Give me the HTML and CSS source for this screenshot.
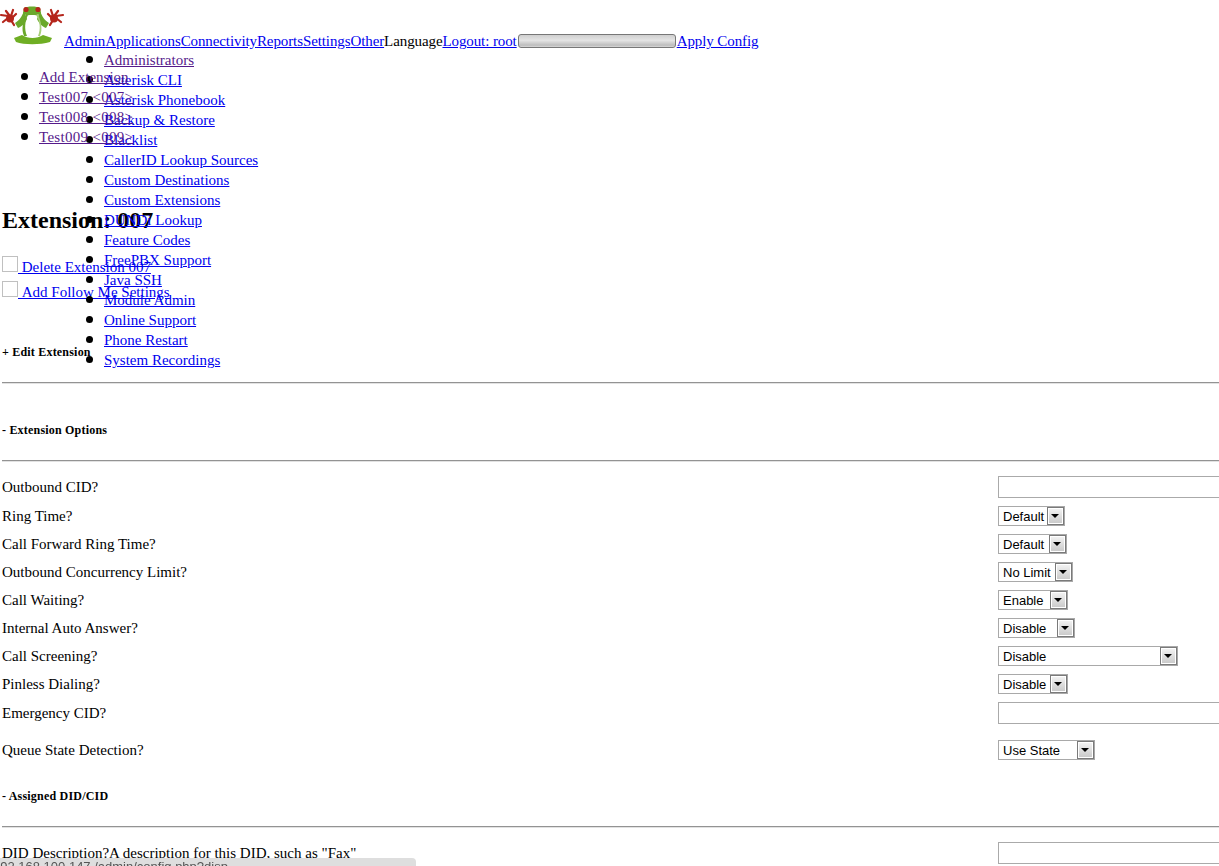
FILE: index.html
```html
<!DOCTYPE html>
<html lang="en">
<head>
<meta charset="utf-8">
<title>Extension: 007</title>
<link rel="stylesheet" href="styles.css">
</head>
<body>
<header class="topbar">
  <svg class="logo" width="64" height="46" viewBox="0 0 64 46" aria-label="Logo">
    <path d="M24 11 C22 16 20 20 15 23 L18 28 C23 26 25 23 27 19Z" fill="#6aa82a"/>
    <path d="M40 11 C42 16 44 20 49 23 L46 28 C41 26 39 23 37 19Z" fill="#6aa82a"/>
    <path d="M24 8 C27 6 37 6 40 8 L41 13 C38 16 36 15 32 15 C28 15 26 16 23 13Z" fill="#6aa82a"/>
    <path d="M26 14 C23 22 21 29 24 36 L27 36 C24 29 25 21 28 15Z" fill="#6aa82a"/>
    <path d="M38 14 C41 22 43 29 40 36 L38 36 C41 29 40 21 36 15Z" fill="#a8cf7a"/>
    <path d="M14 38 L22 35 C28 39 37 39 43 35 L52 38 L50 42 C40 45 24 45 16 42Z" fill="#6fae24"/>
    <circle cx="26" cy="9.5" r="2.6" fill="#b5261c"/>
    <circle cx="38" cy="9.5" r="2.6" fill="#b5261c"/>
    <circle cx="10" cy="18.5" r="4" fill="#b5261c"/>
    <circle cx="54" cy="18.5" r="4" fill="#b5261c"/>
    <path class="hand" d="M8 16 L1 15 M8 18 L3 22 M9 15 L6 11 M11 16 L13 10 M12 18 L16 14 M11 20 L14 25"/>
    <path class="hand" d="M56 16 L63 15 M56 18 L61 22 M55 15 L58 11 M53 16 L51 10 M52 18 L48 14 M53 20 L50 25"/>
  </svg><a href="#">Admin</a><a href="#">Applications</a><a href="#">Connectivity</a><a href="#">Reports</a><a href="#">Settings</a><a href="#">Other</a><span>Language</span><a href="#">Logout: root</a><span class="progress"></span><a href="#">Apply Config</a>
</header>

<ul class="menu">
  <li><a class="seen" href="#">Administrators</a></li>
  <li><a href="#">Asterisk CLI</a></li>
  <li><a href="#">Asterisk Phonebook</a></li>
  <li><a href="#">Backup &amp; Restore</a></li>
  <li><a href="#">Blacklist</a></li>
  <li><a href="#">CallerID Lookup Sources</a></li>
  <li><a href="#">Custom Destinations</a></li>
  <li><a href="#">Custom Extensions</a></li>
  <li><a href="#">DUNDi Lookup</a></li>
  <li><a href="#">Feature Codes</a></li>
  <li><a href="#">FreePBX Support</a></li>
  <li><a href="#">Java SSH</a></li>
  <li><a href="#">Module Admin</a></li>
  <li><a href="#">Online Support</a></li>
  <li><a href="#">Phone Restart</a></li>
  <li><a href="#">System Recordings</a></li>
</ul>

<ul class="extlist">
  <li><a class="seen" href="#">Add Extension</a></li>
  <li><a class="seen ext" href="#">Test007 &lt;007&gt;</a></li>
  <li><a class="seen ext" href="#">Test008 &lt;008&gt;</a></li>
  <li><a class="seen ext" href="#">Test009 &lt;009&gt;</a></li>
</ul>

<main class="content">
  <h2 class="title">Extension: 007</h2>
  <div class="actions">
    <a href="#"><span class="noimg"></span>&nbsp;Delete Extension 007</a>
    <a href="#"><span class="noimg"></span>&nbsp;Add Follow Me Settings</a>
  </div>

  <h5 class="edit">+ Edit Extension</h5>
  <hr class="rule">
  <h5 class="section">- Extension Options</h5>
  <hr class="rule">

  <div class="rows">
    <div class="row"><span>Outbound CID?</span><input class="field" type="text"></div>
    <div class="row"><span>Ring Time?</span><span class="sel w67"><span>Default</span><i class="btn"></i></span></div>
    <div class="row"><span>Call Forward Ring Time?</span><span class="sel w69"><span>Default</span><i class="btn"></i></span></div>
    <div class="row"><span>Outbound Concurrency Limit?</span><span class="sel w75"><span>No Limit</span><i class="btn"></i></span></div>
    <div class="row"><span>Call Waiting?</span><span class="sel w70"><span>Enable</span><i class="btn"></i></span></div>
    <div class="row"><span>Internal Auto Answer?</span><span class="sel w77"><span>Disable</span><i class="btn"></i></span></div>
    <div class="row"><span>Call Screening?</span><span class="sel w180"><span>Disable</span><i class="btn"></i></span></div>
    <div class="row"><span>Pinless Dialing?</span><span class="sel w70"><span>Disable</span><i class="btn"></i></span></div>
    <div class="row"><span>Emergency CID?</span><input class="field" type="text"></div>
    <div class="row queue"><span>Queue State Detection?</span><span class="sel w97"><span>Use State</span><i class="btn"></i></span></div>
  </div>

  <h5 class="section did">- Assigned DID/CID</h5>
  <hr class="rule">
  <div class="rows">
    <div class="row"><span>DID Description?A description for this DID, such as "Fax"</span><input class="field" type="text"></div>
  </div>
</main>

<div class="status"><span>192.168.100.147 /admin/config.php?disp</span></div>
</body>
</html>
```
FILE: styles.css
```css
html, body {
  margin: 0;
  padding: 0;
  height: 866px;
  overflow: hidden;
  background: #fff;
}
body {
  position: relative;
  font-family: "Liberation Serif", "Times New Roman", serif;
  font-size: 15px;
  color: #000;
}
a { color: #0000ee; text-decoration: underline; }
a.seen { color: #551a8b; }
a.ext { letter-spacing: 0.3px; }

.topbar { height: 50px; white-space: nowrap; letter-spacing: -0.1px; }
.logo { vertical-align: baseline; }
.hand { fill: none; stroke: #b5261c; stroke-width: 2.2; stroke-linecap: round; }
.progress {
  display: inline-block;
  box-sizing: border-box;
  width: 158px;
  height: 14px;
  margin: 0 1px 0 1px;
  vertical-align: -2px;
  border: 1px solid #777;
  border-radius: 3px;
  background: linear-gradient(#cfcfcf, #e4e4e4 45%, #bdbdbd 85%, #d8d8d8);
}

.menu, .extlist { margin: 0; list-style: none; line-height: 20px; }
.menu li, .extlist li { position: relative; }
.menu li::before, .extlist li::before {
  content: "";
  position: absolute;
  left: -18px;
  top: 6px;
  width: 7px;
  height: 7px;
  border-radius: 50%;
  background: #000;
}
.menu { position: absolute; left: 64px; top: 50px; padding: 0 0 0 40px; }
.extlist { margin-top: 17px; padding: 0 0 0 39px; }

.content { padding-left: 2px; }
.title { margin: 59px 0 0; font-size: 24px; line-height: 28px; font-weight: bold; }
.actions { display: flex; flex-direction: column; align-items: flex-start; gap: 5px; margin-top: 22px; line-height: 17px; }
.actions a { display: block; }
.noimg {
  display: inline-block;
  box-sizing: border-box;
  width: 16px;
  height: 16px;
  vertical-align: baseline;
  border: 1px solid #c0c0c0;
}
.edit, .section { margin: 0; font-size: 12px; font-weight: bold; line-height: 14px; letter-spacing: 0.2px; }
.edit { margin-top: 44px; }
.rule { height: 0; margin: 0; border: 0; border-top: 1px solid #939393; border-bottom: 1px solid #e2e2e2; }
.edit + .rule { margin-top: 23px; }
.section { margin-top: 39px; }
.section + .rule { margin-top: 23px; }
.section.did { margin-top: 29px; }

.rows { display: flex; flex-direction: column; gap: 8px; margin-top: 14px; }
.row { display: grid; grid-template-columns: 996px 1fr; align-items: center; }
.row.queue { margin-top: 8px; }
.field {
  box-sizing: border-box;
  width: 300px;
  height: 22px;
  margin: 0;
  padding: 0 3px;
  border: 1px solid #aaa;
  background: #fff;
}
.sel {
  box-sizing: border-box;
  display: flex;
  align-items: center;
  justify-content: space-between;
  height: 20px;
  padding-left: 4px;
  border: 1px solid #a9a9a9;
  font: 13px "Liberation Sans", Arial, sans-serif;
  background: #fff;
}
.w67 { width: 67px; }
.w69 { width: 69px; }
.w70 { width: 70px; }
.w75 { width: 75px; }
.w77 { width: 77px; }
.w97 { width: 97px; }
.w180 { width: 180px; }
.btn {
  position: relative;
  box-sizing: border-box;
  flex: none;
  width: 17px;
  height: 18px;
  border: 1px solid #7a7a7a;
  box-shadow: inset 0 0 0 1px #fff;
  background: linear-gradient(#f4f4f4, #c8c8c8);
}
.btn::after {
  content: "";
  position: absolute;
  left: 3px;
  top: 6px;
  border-style: solid;
  border-width: 4px 4px 0;
  border-color: #000 transparent transparent;
}
.status {
  position: fixed;
  left: 0;
  bottom: 0;
  width: 416px;
  height: 8px;
  overflow: hidden;
  background: #dedede;
  border-top-right-radius: 4px;
  font: 13px/18px "Liberation Sans", Arial, sans-serif;
  color: #555;
  white-space: nowrap;
}
.status span { margin-left: -7px; }
```
